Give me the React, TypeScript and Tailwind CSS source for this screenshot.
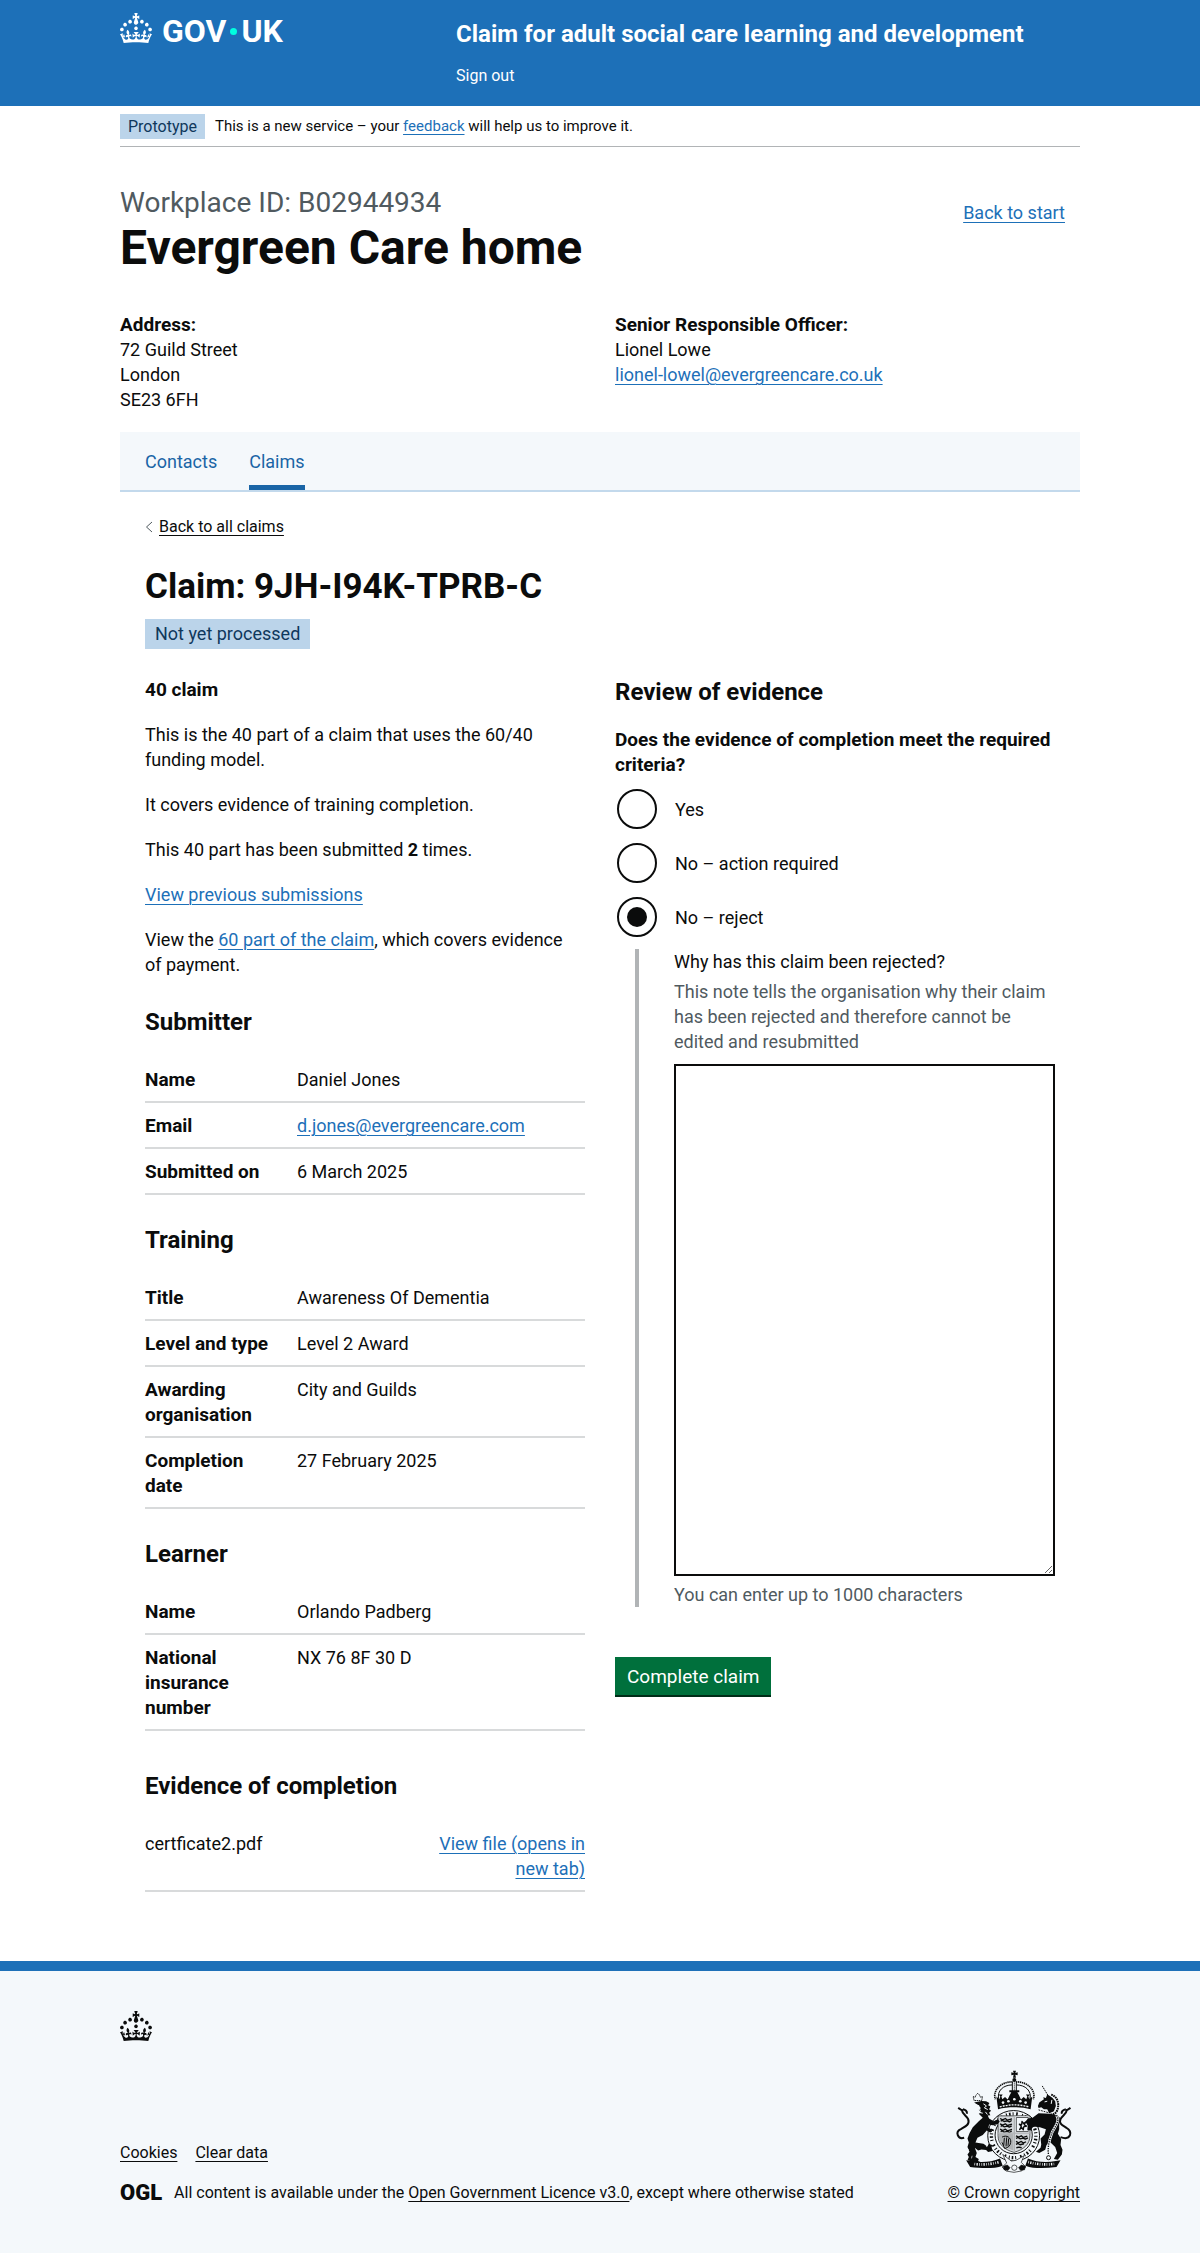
import { useState, type ReactNode } from "react";

const CROWN =
  "M22.6 10.4c-1 .4-2-.1-2.4-1-.4-.9.1-2 1-2.4.9-.4 2 .1 2.4 1s-.1 2-1 2.4m-5.9 6.7c-.9.4-2-.1-2.4-1-.4-.9.1-2 1-2.4.9-.4 2 .1 2.4 1s-.1 2-1 2.4m10.8-3.7c-1 .4-2-.1-2.4-1-.4-.9.1-2 1-2.4.9-.4 2 .1 2.4 1s0 2-1 2.4m3.3 4.8c-1 .4-2-.1-2.4-1-.4-.9.1-2 1-2.4.9-.4 2 .1 2.4 1s-.1 2-1 2.4M17 4.7l2.3 1.2V2.5l-2.3.7-.2-.2.9-3h-3.4l.9 3-.2.2c-.1.1-2.3-.7-2.3-.7v3.4L15 4.7c.1.1.1.2.2.2l-1.3 4c-.1.2-.1.4-.1.6 0 1.1.8 2 1.9 2.2h.7c1-.2 1.9-1.1 1.9-2.1 0-.2 0-.4-.1-.6l-1.3-4c-.1-.2 0-.2.1-.3m-7.6 5.7c.9.4 2-.1 2.4-1 .4-.9-.1-2-1-2.4-.9-.4-2 .1-2.4 1s0 2 1 2.4m-5 3c.9.4 2-.1 2.4-1 .4-.9-.1-2-1-2.4-.9-.4-2 .1-2.4 1s.1 2 1 2.4m-3.2 4.8c.9.4 2-.1 2.4-1 .4-.9-.1-2-1-2.4-.9-.4-2 .1-2.4 1s0 2 1 2.4m14.8 11c4.4 0 8.6.3 12.3.8 1.1-4.5 2.4-7 3.7-8.8l-2.5-.9c.2 1.3.3 1.9 0 2.7-.4-.4-.8-1.1-1.1-2.3l-1.2 4c.7-.5 1.3-.8 2-.9-1.1 2.5-2.6 3.1-3.5 3-1.1-.2-1.7-1.2-1.5-2.1.3-1.2 1.5-1.5 2.1-.1 1.1-2.3-.8-3-2-2.3 1.9-1.9 2.1-3.5.6-5.6-2.1 1.6-2.1 3.2-1.2 5.5-1.2-1.4-3.2-.6-2.5 1.6.9-1.4 2.1-.5 1.9.8-.2 1.1-1.7 2.1-3.5 1.9-2.7-.2-2.9-2.1-2.9-3.6.7-.1 1.9.5 2.9 1.9l.4-4.3c-1.1 1.1-2.1 1.4-3.2 1.4.4-1.2 2.1-3 2.1-3h-5.4s1.7 1.9 2.1 3c-1.1 0-2.1-.2-3.2-1.4l.4 4.3c1-1.4 2.2-2 2.9-1.9-.1 1.5-.2 3.4-2.9 3.6-1.9.2-3.4-.8-3.5-1.9-.2-1.3 1-2.2 1.9-.8.7-2.3-1.2-3-2.5-1.6.9-2.2.9-3.9-1.2-5.5-1.5 2-1.3 3.7.6 5.6-1.2-.7-3.1 0-2 2.3.6-1.4 1.8-1.1 2.1.1.2.9-.3 1.9-1.5 2.1-.9.2-2.4-.5-3.5-3 .6 0 1.2.3 2 .9l-1.2-4c-.3 1.1-.7 1.9-1.1 2.3-.3-.8-.2-1.4 0-2.7l-2.9.9C1.3 23 2.6 25.5 3.7 30c3.7-.5 7.9-.8 12.3-.8";

function Crown() {
  return (
    <svg viewBox="0 0 32 30" width="32" height="30" fill="currentColor" aria-hidden="true">
      <path d={CROWN} />
    </svg>
  );
}

function Arms() {
  return (
    <svg viewBox="50 60 352 310" width="118" height="103" aria-hidden="true" className="text-[#0b0c0c]" fill="currentColor" stroke="none">
      {/* royal crown */}
      <path d="M223 62h9l-2 7 7-2v9l-7-2 2 9h-9l2-9-7 2v-9l7 2z" />
      <circle cx="227" cy="90" r="6" />
      <g fill="none" stroke="currentColor">
        <path d="M222 96c-34-2-62 26-52 52M232 96c34-2 62 26 52 52" strokeWidth="5" strokeDasharray="4 2" />
        <path d="M220 105c-26 0-46 18-40 42M234 105c26 0 46 18 40 42" strokeWidth="3" />
        <path d="M221 96v34M233 96v34" strokeWidth="3" />
        <path d="M227 98v32" strokeWidth="3" strokeDasharray="3 3" />
      </g>
      <path d="M178 178l-5-38 9 8 3-8-5-6h12l-4 6 3 8 8-7 8 8 6-13 5-9h-6v-6h30v6h-6l5 9 6 13 8-8 8 7 3-8-4-6h12l-5 6 3 8 9-8-5 38c-30-8-68-8-98 0z" />
      <g fill="#f4f8fb">
        <circle cx="193" cy="158" r="4" />
        <circle cx="209" cy="154" r="4" />
        <circle cx="227" cy="148" r="4" />
        <circle cx="245" cy="154" r="4" />
        <circle cx="261" cy="158" r="4" />
      </g>
      <path d="M183 171q44-12 88 0" fill="none" stroke="#f4f8fb" strokeWidth="4" strokeDasharray="6 3" />

      {/* garter */}
      <g fill="none" stroke="currentColor">
        <ellipse cx="225" cy="258" rx="78" ry="76" strokeWidth="3" fill="#f4f8fb" />
        <ellipse cx="225" cy="258" rx="67" ry="66" strokeWidth="10" strokeDasharray="3 6 5 6 3 8 5 12" />
        <ellipse cx="225" cy="256" rx="56" ry="56" strokeWidth="3" />
      </g>

      {/* quartered shield */}
      <path d="M178 198h96v60c0 26-20 42-48 50-28-8-48-24-48-50z" fill="#d5d9dc" stroke="currentColor" strokeWidth="2" />
      <path d="M230 200h42v48h-42z" fill="#f4f8fb" />
      <path d="M180 252h44v50c-26-8-44-22-44-46z" fill="#b1b4b6" />
      <path d="M233 203h36v42h-36z" fill="none" stroke="currentColor" strokeWidth="2" />
      <g fill="none" stroke="currentColor" strokeWidth="4" strokeLinejoin="round">
        <path d="M184 206l8 4 8-4 6 5 14-4M186 214l4-3 6 4 10-2 6 3 7-4" />
        <path d="M184 222l8 4 8-4 6 5 14-4M186 230l4-3 6 4 10-2 6 3 7-4" />
        <path d="M184 238l8 4 8-4 6 5 14-4M186 246l4-3 6 4 10-2 6 3 7-4" />
        <path d="M232 258l8 4 8-4 6 5 12-4M232 266l6-3 6 4 10-2 6 3 8-4" />
        <path d="M232 275l8 4 8-4 6 5 8-4M232 284l6-3 6 4 12-3M233 294l8-2 8 2" />
        <path d="M243 239l5-9-6-7 7 2 1-10 5 6 6-4-4 8 7 4-9 2-1 9-4-6z" />
        <path d="M190 262c14-8 28 2 26 16-1 10-8 16-18 18l-8-18M197 264l-2 24M204 263l-2 27M210 266l-2 22" strokeWidth="3" />
      </g>
      <path d="M227 198v108M178 250h96" stroke="#b1b4b6" strokeWidth="4" />

      {/* lion */}
      <path d="M106 152l-3-12 6 2 3-7 5-5 5 5 3 7 6-2-2 12z" fill="none" stroke="currentColor" strokeWidth="3" strokeDasharray="4 2" />
      <path d="M106 158l22-5 14 1 10 5-4 7 7 4-4 8 6 5-6 6 4 7-8 1 4 9 14 8 12-6 6 7-6 8-16 3-10-2-2 10 8 4 3 8-6 2-10-6-12 14-16 8-6 14 24 4 12 8 4-8 10 4-2 10 4 8-14 3-6-6-14-2-10 3-10-8 6 16-4 12 10 6-2 6 8 4-10 6-14-2-8-8-8-2 4-10-4-8 6-8-6-14 4-14-4-12 6-16 10-18 18-18 12-10-12-12 8-4-8-8 6-6-6-7z" />
      <g fill="none" stroke="#f4f8fb" strokeWidth="3">
        <path d="M112 165l9 3-4 5 8 4M134 162l9 6-6 6 10 5M122 188l10 2M140 186l6 8M120 178l6 4" />
        <path d="M82 296l8 4M100 318l-2 8M142 284l2 8" strokeWidth="2" />
      </g>
      <path d="M76 264c-20 6-28-18-10-26 14-8 28-14 22-30-4-10-18-14-20-30M58 174l12 8M72 178c8 2 14 6 12 14" fill="none" stroke="currentColor" strokeWidth="6" strokeLinejoin="round" />

      {/* unicorn */}
      <path d="M311 108l17 28" stroke="currentColor" strokeWidth="3" strokeDasharray="5 2" />
      <path d="M298 168l4-10 14-10-2-6 8 2 4-10 8 4 8 6 8 10 2 14-6 16-14 6-6-12-10 0-8-6-8 2z" />
      <g fill="none" stroke="currentColor">
        <path d="M338 134c18 6 26 26 18 48-4 8-10 12-20 12" strokeWidth="6" strokeDasharray="5 2" />
        <path d="M300 180l28 8 14-4" strokeWidth="3" strokeDasharray="5 3" />
      </g>
      <path d="M318 156l8-2M340 150l-2 12" stroke="#f4f8fb" strokeWidth="3" />
      <path d="M300 190l34 2 22 4 8 8-2 14 0 20-4 14 10 16-2 18 6 14-2 14-12 16-12-2 10-18-6-18-14-14-12 8-4 14-18 10-10-4 14-12 2-10-2-18 12-12 4-16-18-6-20-2-8 12-10-2 2-12-8-12 8-10 14-2z" />
      <path d="M354 196c12 20-8 38-14 54s-14 40-10 66" fill="none" stroke="#f4f8fb" strokeWidth="8" />
      <path d="M354 196c12 20-8 38-14 54s-14 40-10 66" fill="none" stroke="currentColor" strokeWidth="4" strokeDasharray="4 3" />
      <circle cx="330" cy="324" r="6" fill="#f4f8fb" stroke="currentColor" strokeWidth="3" />
      <path d="M366 262c32 12 38-18 18-28-12-8-24-12-18-26 4-10 18-14 20-30M396 174l-12 8M382 178c-8 2-14 6-12 14" fill="none" stroke="currentColor" strokeWidth="6" strokeLinejoin="round" />

      {/* motto ribbon and plants */}
      <path d="M82 332l16 2c30 5 60 3 86-8l8 22c-28 10-62 8-98 4zM366 332l-14 2c-32 5-58 3-84-8l-8 22c28 10 60 8 94 4z" />
      <g fill="none" stroke="#f4f8fb" strokeWidth="8" strokeDasharray="2 4 4 4 2 5">
        <path d="M107 343q38 4 74-6" />
        <path d="M269 337q36 10 78 6" />
      </g>
      <g stroke="currentColor" strokeWidth="2" fill="#f4f8fb">
        <path d="M192 314l26 20 14-2 24-14-8 20 14 14-14 12-22 4-24-4-12-12 14-12z" />
        <path d="M194 350l12-4 8 8-6 8-12-2zM260 350l-12-4-8 8 6 8 12-2z" fill="currentColor" />
        <circle cx="227" cy="354" r="8" />
      </g>
    </svg>
  );
}

const LINK = "text-[#1d70b8] underline decoration-1 underline-offset-3";
const DARK_LINK = "underline decoration-1 underline-offset-3";

function Link({ children, dark }: { children: ReactNode; dark?: boolean }) {
  return (
    <a href="#" className={dark ? DARK_LINK : LINK}>
      {children}
    </a>
  );
}

function Section({ title, rows }: { title: string; rows: [string, ReactNode][] }) {
  return (
    <section className="mt-[30px]">
      <h3 className="mb-5 text-2xl leading-[30px] font-bold">{title}</h3>
      <dl>
        {rows.map(([key, value]) => (
          <div key={key} className="flex border-b-2 border-[#d8dadb] pt-2.5 pb-[9px]">
            <dt className="w-[152px] shrink-0 pr-5 text-[19px] font-bold">{key}</dt>
            <dd>{value}</dd>
          </div>
        ))}
      </dl>
    </section>
  );
}

const OPTIONS = ["Yes", "No – action required", "No – reject"];

function Review() {
  const [choice, setChoice] = useState("No – reject");
  return (
    <form onSubmit={(e) => e.preventDefault()}>
      <h3 className="mb-5 text-2xl leading-[30px] font-bold">Review of evidence</h3>
      <fieldset>
        <legend className="mb-3 text-[19px] font-bold">Does the evidence of completion meet the required criteria?</legend>
        <div className="flex flex-col gap-3.5 pl-0.5">
          {OPTIONS.map((option, i) => (
            <div key={option} className="flex items-center gap-[18px]">
              <input
                type="radio"
                id={`option-${i}`}
                name="review"
                checked={choice === option}
                onChange={() => setChoice(option)}
                className="grid size-10 appearance-none place-items-center rounded-full border-2 border-[#0b0c0c] bg-white before:size-5 before:rounded-full checked:before:bg-[#0b0c0c]"
              />
              <label htmlFor={`option-${i}`}>{option}</label>
            </div>
          ))}
        </div>
        <div className="mt-3 ml-5 border-l-4 border-[#b1b4b6] pl-[35px]">
          <label htmlFor="reason" className="mb-[5px] block">
            Why has this claim been rejected?
          </label>
          <p id="reason-hint" className="mb-2.5 text-[#505a5f]">
            This note tells the organisation why their claim has been rejected and therefore cannot be edited and resubmitted
          </p>
          <textarea id="reason" aria-describedby="reason-hint" rows={20} className="mb-1.5 block w-full resize-y border-2 border-[#0b0c0c] bg-white px-1 py-1" />
          <p className="text-[#505a5f]">You can enter up to 1000 characters</p>
        </div>
      </fieldset>
      <button type="submit" className="mt-[50px] bg-[#00703c] px-3 pt-[7px] pb-1.5 text-[19px] text-white shadow-[0_2px_0_#002d18]">
        Complete claim
      </button>
    </form>
  );
}

export default function App() {
  return (
    <div className="bg-white font-['Roboto',sans-serif] text-lg leading-[25px] text-[#0b0c0c]">
      <header className="bg-[#1d70b8] px-[30px] text-white">
        <div className="mx-auto flex max-w-[960px] pb-5">
          <div className="w-[35%] pt-[13px]">
            <a href="#" aria-label="GOV.UK" className="inline-flex h-[30px] items-end gap-2.5">
              <Crown />
              <span className="flex items-center text-[32px] leading-6 font-bold">
                GOV
                <span className="mx-1 size-[7px] rounded-full bg-[#00ffe0]" />
                UK
              </span>
            </a>
          </div>
          <div className="flex-1 pt-[19px]">
            <a href="#" className="block text-2xl leading-[30px] font-bold">
              Claim for adult social care learning and development
            </a>
            <a href="#" className="mt-[17px] block text-base leading-5">
              Sign out
            </a>
          </div>
        </div>
      </header>

      <div className="px-[30px]">
        <div className="mx-auto max-w-[960px]">
          <div className="flex items-center gap-2.5 border-b border-[#b1b4b6] pt-2 pb-[7px] leading-[25px]">
            <strong className="bg-[#bbd4ea] px-2 text-base leading-[25px] font-normal text-[#0f385c]">Prototype</strong>
            <span className="text-[15px]">
              This is a new service – your <Link>feedback</Link> will help us to improve it.
            </span>
          </div>

          <main className="pt-[41px] pb-[69px]">
            <div className="flex justify-between">
              <h1 className="text-5xl leading-[50px] font-bold">
                <span className="mb-[5px] block text-[28px] leading-[30px] font-normal text-[#505a5f]">Workplace ID: B02944934</span>
                Evergreen Care home
              </h1>
              <p className="pt-3 pr-[15px]">
                <Link>Back to start</Link>
              </p>
            </div>

            <div className="mt-[39px] grid grid-cols-2 gap-[30px]">
              <address className="not-italic">
                <strong className="block text-[19px]">Address:</strong>
                72 Guild Street
                <br />
                London
                <br />
                SE23 6FH
              </address>
              <p>
                <strong className="block text-[19px]">Senior Responsible Officer:</strong>
                Lionel Lowe
                <br />
                <Link>lionel-lowel@evergreencare.co.uk</Link>
              </p>
            </div>

            <nav className="mt-5 flex gap-8 border-b-2 border-[#c3d9ec] bg-[#f4f8fb] px-[25px] text-[#1a65a6]">
              <a href="#" className="pt-[17px] pb-[11px]">
                Contacts
              </a>
              <a href="#" aria-current="page" className="border-b-5 border-[#1a65a6] pt-[17px] pb-[11px]">
                Claims
              </a>
            </nav>

            <div className="px-[25px]">
              <div className="mt-[25px] flex items-center gap-1.5 text-base leading-5">
                <svg width="8" height="12" viewBox="0 0 8 12" fill="none" stroke="#505a5f" aria-hidden="true">
                  <path d="M7 1L1.5 6L7 11" />
                </svg>
                <Link dark>Back to all claims</Link>
              </div>
              <h2 className="mt-[30px] text-[35px] leading-10 font-bold">Claim: 9JH-I94K-TPRB-C</h2>
              <strong className="mt-3 inline-block bg-[#bbd4ea] px-2.5 leading-[30px] font-normal text-[#0f385c]">Not yet processed</strong>

              <div className="mt-7 grid grid-cols-2 gap-[30px]">
                <div>
                  <div className="flex flex-col gap-5 pr-5">
                    <p className="text-[19px] font-bold">40 claim</p>
                    <p>This is the 40 part of a claim that uses the 60/40 funding model.</p>
                    <p>It covers evidence of training completion.</p>
                    <p>
                      This 40 part has been submitted <b>2</b> times.
                    </p>
                    <p>
                      <Link>View previous submissions</Link>
                    </p>
                    <p>
                      View the <Link>60 part of the claim</Link>, which covers evidence of payment.
                    </p>
                  </div>
                  <Section
                    title="Submitter"
                    rows={[
                      ["Name", "Daniel Jones"],
                      ["Email", <Link>d.jones@evergreencare.com</Link>],
                      ["Submitted on", "6 March 2025"],
                    ]}
                  />
                  <Section
                    title="Training"
                    rows={[
                      ["Title", "Awareness Of Dementia"],
                      ["Level and type", "Level 2 Award"],
                      ["Awarding organisation", "City and Guilds"],
                      ["Completion date", "27 February 2025"],
                    ]}
                  />
                  <Section
                    title="Learner"
                    rows={[
                      ["Name", "Orlando Padberg"],
                      ["National insurance number", "NX 76 8F 30 D"],
                    ]}
                  />
                  <section className="mt-10">
                    <h3 className="mb-5 text-2xl leading-[30px] font-bold">Evidence of completion</h3>
                    <div className="flex justify-between border-b-2 border-[#d8dadb] pt-2.5 pb-[9px]">
                      <span>certficate2.pdf</span>
                      <span className="w-[160px] text-right">
                        <Link>View file (opens in new tab)</Link>
                      </span>
                    </div>
                  </section>
                </div>
                <Review />
              </div>
            </div>
          </main>
        </div>
      </div>

      <footer className="border-t-10 border-[#1d70b8] bg-[#f4f8fb] px-[30px] text-base leading-5">
        <div className="mx-auto max-w-[960px] pt-10 pb-[50px]">
          <Crown />
          <div className="mt-[29px] flex items-end justify-between">
            <div>
              <ul className="mb-5 flex gap-[18px]">
                <li>
                  <Link dark>Cookies</Link>
                </li>
                <li>
                  <Link dark>Clear data</Link>
                </li>
              </ul>
              <div className="flex items-center gap-3">
                <span className="text-[22px] font-black">OGL</span>
                <span>
                  All content is available under the <Link dark>Open Government Licence v3.0</Link>, except where otherwise stated
                </span>
              </div>
            </div>
            <div className="flex flex-col items-center gap-2.5">
              <Arms />
              <Link dark>© Crown copyright</Link>
            </div>
          </div>
        </div>
      </footer>
    </div>
  );
}
